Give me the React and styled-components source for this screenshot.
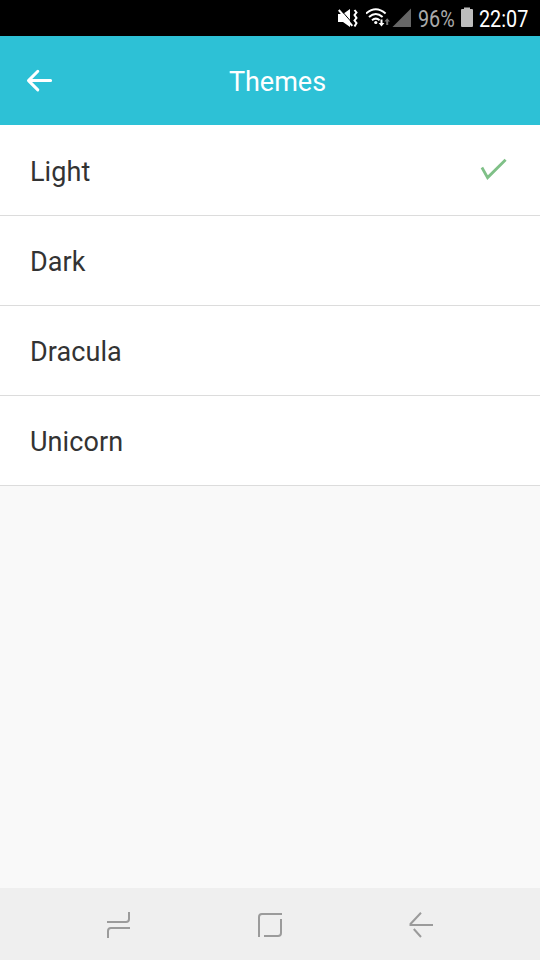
import React from 'react';
import styled, { createGlobalStyle } from 'styled-components';

const GlobalStyle = createGlobalStyle`
  * { box-sizing: border-box; }
  body { margin: 0; font-family: Roboto, sans-serif; }
`;
const Screen = styled.div`
  display: flex;
  flex-direction: column;
  height: 960px;
  width: 540px;
  background: #f9f9f9;
`;
const StatusBar = styled.header`
  height: 36px;
  display: flex;
  justify-content: flex-end;
  align-items: center;
  padding-right: 12px;
  background: #000;
`;
const StatusText = styled.span`
  flex: none;
  color: ${(p) => p.$color};
  font-size: 23px;
  line-height: 32px;
  padding-top: 4px;
  width: ${(p) => p.$width}px;
  margin-left: ${(p) => p.$gap}px;
  white-space: nowrap;
  transform: scaleX(${(p) => p.$scale});
  transform-origin: left;
`;
const StatusIcon = styled.svg`
  flex: none;
  display: block;
  margin-left: ${(p) => p.$gap || 0}px;
`;
const TitleBar = styled.div`
  height: 89px;
  display: grid;
  grid-template-columns: 80px 1fr 80px;
  align-items: center;
  background: #2dc1d6;
`;
const Title = styled.h1`
  margin: 0;
  padding: 2px 0 0 15px;
  text-align: center;
  font-size: 27px;
  font-weight: 400;
  color: #fff;
`;
const BackButton = styled.button`
  display: flex;
  border: 0;
  padding: 0 0 0 24px;
  background: none;
`;
const List = styled.main`
  flex: 1;
`;
const Row = styled.div`
  height: 90px;
  display: flex;
  align-items: center;
  justify-content: space-between;
  padding: 3px 30px 0;
  font-size: 27px;
  letter-spacing: 0.08px;
  color: #333;
  background: #fff;
  border-bottom: 1px solid #dcdcdc;
  &:first-child { height: 91px; }
`;
const CheckIcon = styled.svg`
  margin: -5px 1px 0 0;
`;
const NavBar = styled.nav`
  height: 72px;
  display: flex;
  justify-content: space-between;
  align-items: center;
  padding: 2px 101px 0 101px;
  background: #efefef;
`;
const NavButton = styled.button`
  display: flex;
  border: 0;
  padding: 0;
  background: none;
`;
const NavIcon = styled.svg.attrs({ width: 36, height: 36, viewBox: '0 0 36 36' })`
  fill: none;
  stroke: #9b9b9b;
  stroke-width: 2;
`;

const themes = ['Light', 'Dark', 'Dracula', 'Unicorn'];
const navActions = [
  { label: 'Recent apps', path: 'M6 15H25Q28 15 28 12V5M7 31V24Q7 21 10 21H29' },
  { label: 'Home', path: 'M7 30V10Q7 7 10 7H30M29 12V26Q29 29 26 29H12' },
  { label: 'Back', path: 'M18 5.7L7.5 17V18H30M10.8 22L18 30' },
];

export default function App() {
  const selected = 'Light';
  return (
    <Screen>
      <GlobalStyle />
      <StatusBar>
        <StatusIcon width="20" height="36" viewBox="338 0 20 36">
          <path fill="#fff" d="M338 14H343L350 9V27L343 22H338Z" />
          <path stroke="#000" strokeWidth="1" d="M340.5 9.5L353.5 24.5" />
          <path stroke="#fff" strokeWidth="2" d="M338.8 10L352.3 25.8" />
          <path fill="none" stroke="#fff" strokeWidth="2" d="M354.5 10L356.5 12.5L354.5 15L356.5 18L354.5 20.5L356.5 23L354.5 26.5" />
        </StatusIcon>
        <StatusIcon width="24" height="36" viewBox="366 0 24 36" $gap={8}>
          <g fill="none" stroke="#fff" strokeWidth="2">
            <path d="M366 13.5Q375.8 5 385.6 13.5" />
            <path d="M369 17Q375.8 11 382.6 17" />
            <path d="M372 20.3Q375.8 17 379.6 20.3" />
          </g>
          <circle cx="375.8" cy="22.5" r="1.6" fill="#fff" />
          <path fill="#fff" d="M380.5 19.5H382.5V23H384.4L381.5 26.4L378.6 23H380.5Z" />
          <path fill="#777" d="M386.2 25V21.5H384.4L387.2 18.2L390 21.5H388.2V25Z" />
        </StatusIcon>
        <StatusIcon width="19" height="36" viewBox="392 0 19 36" $gap={2}>
          <path fill="#666" d="M392.5 27L411 8.5V27Z" />
        </StatusIcon>
        <StatusText $color="#aaa" $width={36} $gap={7} $scale={0.86}>96%</StatusText>
        <StatusIcon width="12" height="36" viewBox="461 0 12 36" $gap={7}>
          <path fill="#bdbdbd" d="M464 7.5H470V9H472Q473 9 473 10V26Q473 27 472 27H462Q461 27 461 26V10Q461 9 462 9H464Z" />
        </StatusIcon>
        <StatusText $color="#fff" $width={49} $gap={6} $scale={0.86}>22:07</StatusText>
      </StatusBar>
      <TitleBar>
        <BackButton aria-label="Back">
          <svg width="32" height="29" viewBox="24 66 32 29" fill="none" stroke="#fff" strokeWidth="3" strokeLinecap="round" strokeLinejoin="round">
            <path d="M37.8 71.3L28.5 80.6L37.8 89.9M29 80.6H50.6" />
          </svg>
        </BackButton>
        <Title>Themes</Title>
      </TitleBar>
      <List>
        {themes.map((theme) => (
          <Row key={theme}>
            {theme}
            {theme === selected && (
              <CheckIcon width="30" height="24" viewBox="479 157 30 24" fill="none" stroke="#7fc087" strokeWidth="2.8">
                <path d="M481.9 167.5L487.6 177.6L505.6 159.7" />
              </CheckIcon>
            )}
          </Row>
        ))}
      </List>
      <NavBar>
        {navActions.map(({ label, path }) => (
          <NavButton key={label} aria-label={label}>
            <NavIcon><path d={path} /></NavIcon>
          </NavButton>
        ))}
      </NavBar>
    </Screen>
  );
}
